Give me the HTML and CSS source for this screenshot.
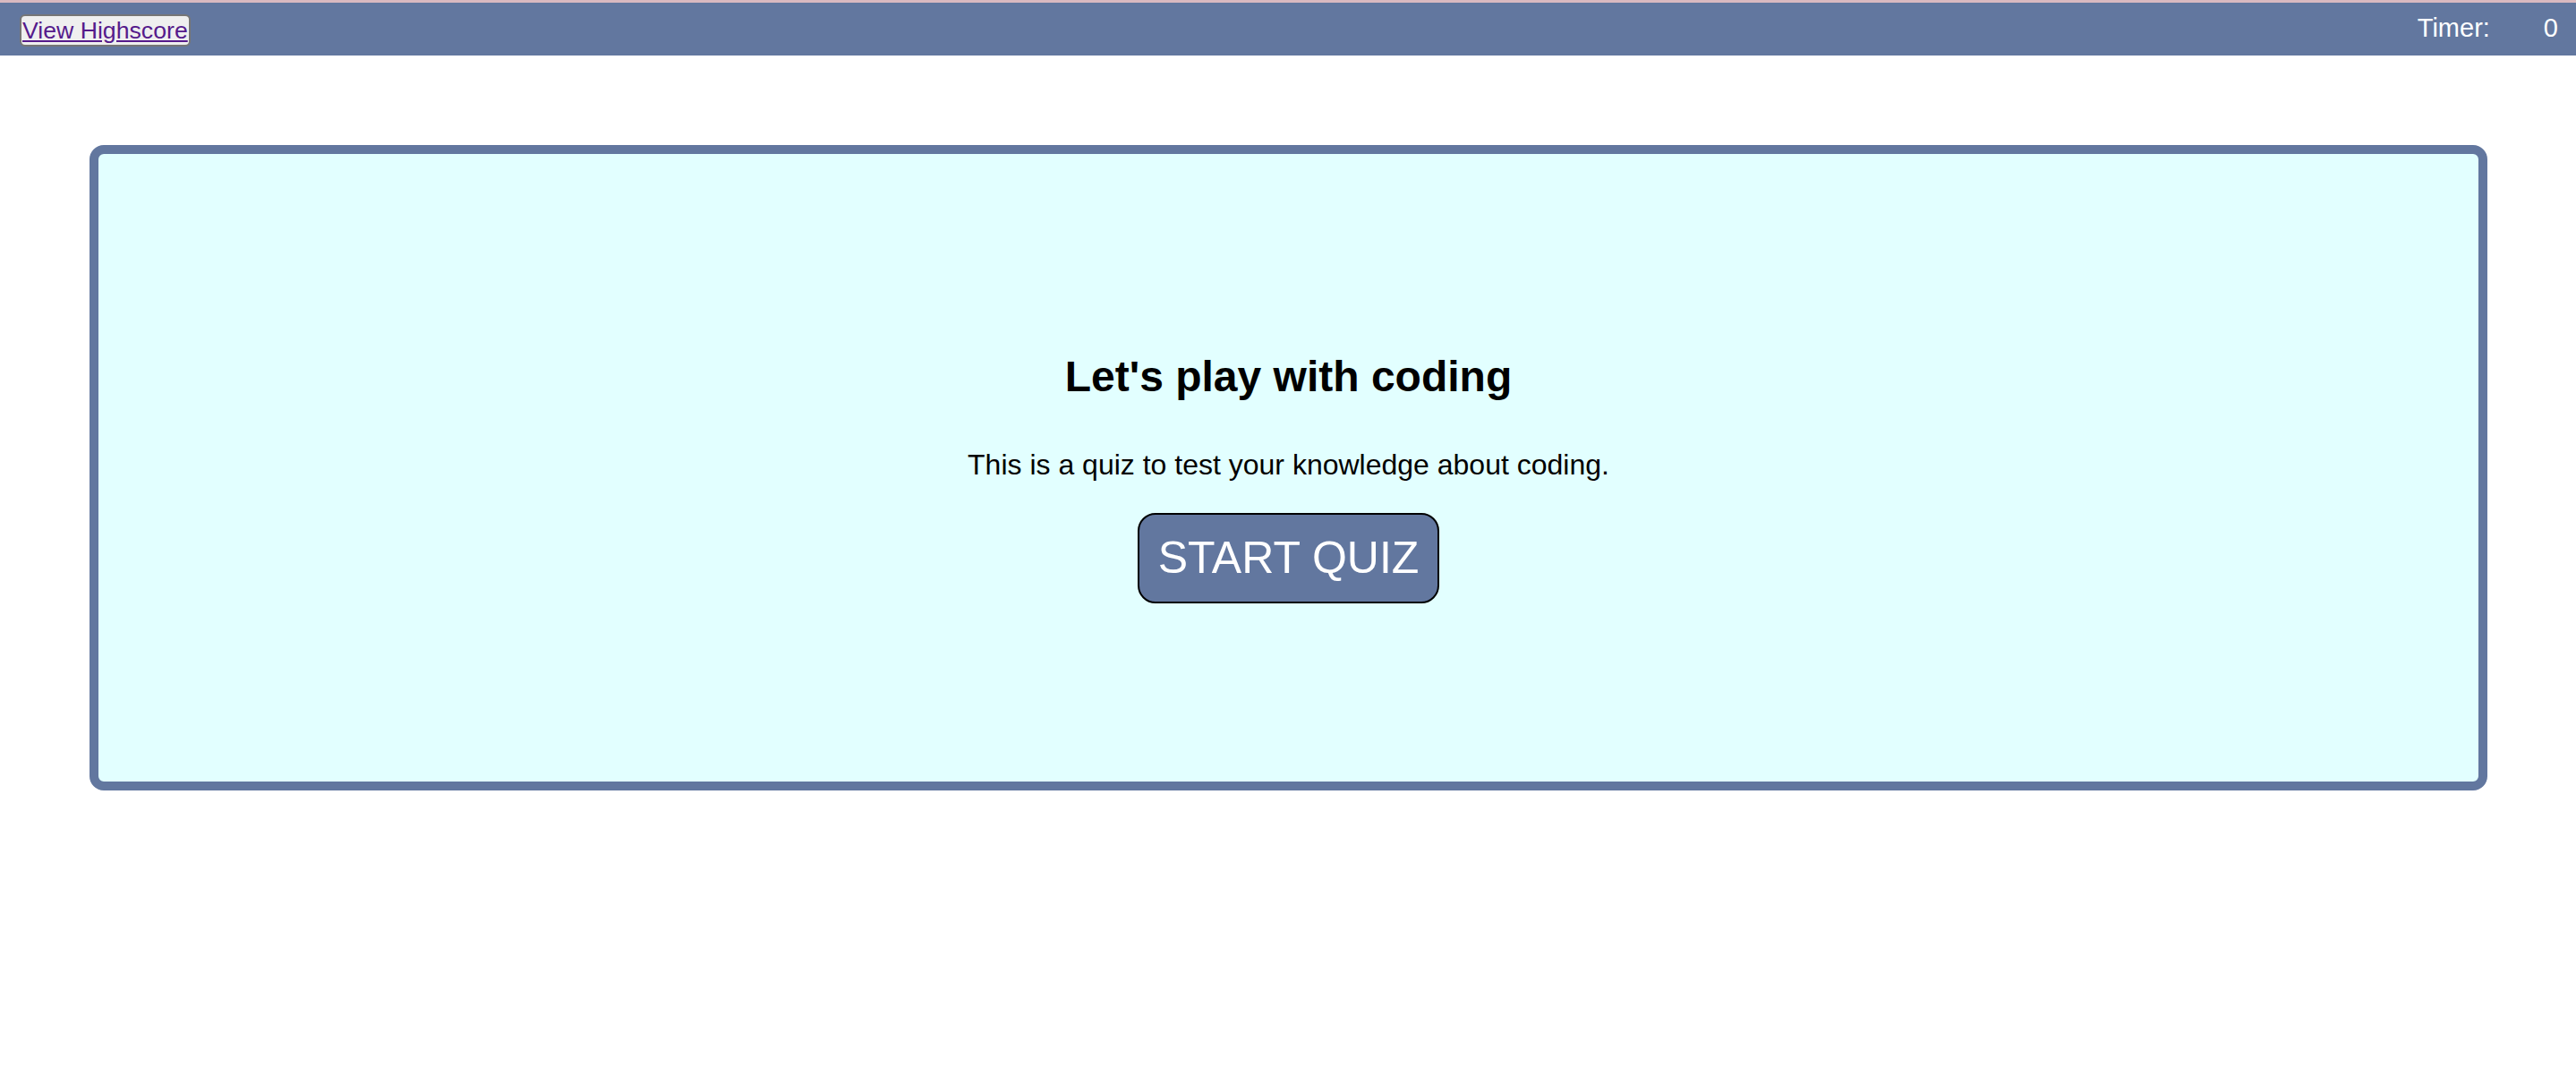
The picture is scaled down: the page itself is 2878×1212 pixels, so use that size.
FILE: index.html
```html
<!DOCTYPE html>
<html lang="en">
<head>
<meta charset="utf-8">
<title>Coding Quiz</title>
<link rel="stylesheet" href="styles.css">
</head>
<body>
<header class="topbar">
  <button class="hs-btn"><a class="hs-link" href="#">View Highscore</a></button>
  <div class="timer"><span class="timer-label">Timer:</span><span class="timer-value">0</span></div>
</header>
<main class="card">
  <h2 class="card-title">Let's play with coding</h2>
  <p class="card-text">This is a quiz to test your knowledge about coding.</p>
  <button class="start-btn">START QUIZ</button>
</main>
</body>
</html>
```
FILE: styles.css
```css
html, body {
  margin: 0;
  padding: 0;
  background: #ffffff;
  font-family: "Liberation Sans", Arial, sans-serif;
}

.topbar {
  display: flex;
  justify-content: space-between;
  align-items: center;
  height: 59px;
  border-top: 3px solid #d9b9c0;
  background: #62779f;
  padding: 0 20px 0 22px;
}

.hs-btn {
  margin: 0;
  padding: 0 1px;
  height: 36px;
  background: #efefef;
  border: 2px solid #767676;
  border-radius: 6px;
  font-family: "Liberation Sans", Arial, sans-serif;
  font-size: 26.67px;
  line-height: 30px;
  position: relative;
  top: 1px;
}

.hs-link {
  color: #551a8b;
  text-decoration: underline;
}

.timer {
  display: flex;
  align-items: center;
  color: #ffffff;
  font-size: 29px;
  position: relative;
  top: -1px;
}

.timer-value {
  margin-left: 60px;
}

.card {
  display: flex;
  flex-direction: column;
  align-items: center;
  box-sizing: border-box;
  height: 721px;
  margin: 100px 99px 0 100px;
  padding-top: 221px;
  background: #e2ffff;
  border: 10px solid #62779f;
  border-radius: 16px;
}

.card-title {
  margin: 0;
  font-size: 48px;
  font-weight: bold;
  line-height: 55px;
  color: #000000;
}

.card-text {
  margin: 53px 0 0;
  font-size: 32px;
  line-height: 37px;
  color: #000000;
}

.start-btn {
  margin-top: 35px;
  padding: 20px 21px;
  background: #62779f;
  color: #ffffff;
  border: 2px solid #000000;
  border-radius: 20px;
  font-family: "Liberation Sans", Arial, sans-serif;
  font-size: 50px;
  line-height: 57px;
}
```
